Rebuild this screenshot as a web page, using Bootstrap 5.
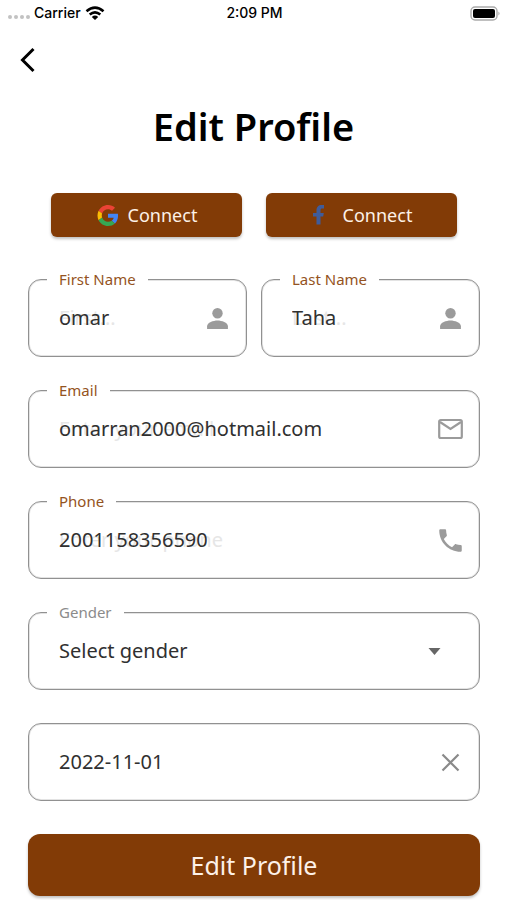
<!DOCTYPE html>
<html lang="en">
<head>
<meta charset="utf-8">
<meta name="viewport" content="width=device-width, initial-scale=1">
<title>Edit Profile</title>
<link href="https://cdn.jsdelivr.net/npm/bootstrap@5.3.0/dist/css/bootstrap.min.css" rel="stylesheet">
<style>
  :root { --brown: #823b06; --line: #919191; --icon: #9b9b9b; }
  body { font-family: "Noto Sans", sans-serif; color: #000; background: #fff; }
  svg { display: block; flex-shrink: 0; }
  .status { height: 26px; padding: 0 6px 0 8px; font: 500 14px/26px Inter, sans-serif; }
  .signal { gap: 2px; }
  .signal i { width: 4px; height: 4px; border-radius: 50%; background: #c2c2c2; }
  .back { margin: 18px 0 0 16px; }
  .page-title { margin: 26px 0 0; font-size: 38px; line-height: 48px; font-weight: 600; }
  .btn-brown, .btn-brown:hover, .btn-brown:active { background: var(--brown) !important; color: #fdf1e8 !important; border: 0; box-shadow: 0 2px 3px rgba(0,0,0,.25); }
  main { padding: 0 27px 4px 28px; }
  .socials { gap: 24px; padding: 0 23px; margin: 43px 0 42px; }
  .social { height: 44px; font-size: 18px; line-height: 24px; border-radius: 6px; }
  .fields { gap: 33px; }
  .pair { gap: 14px; }
  .field { height: 78px; border: 1px solid var(--line); border-radius: 13px; box-shadow: inset 0 0 0 1px rgba(145,145,145,.25); padding: 0 16px 0 30px; }
  .field > label { top: -11px; left: 18px; padding: 0 12px; background: #fff; color: #945322; font-size: 15px; line-height: 20px; }
  .field > label.muted { color: #8b8b8b; }
  .entry { display: grid; min-width: 0; }
  .entry > * { grid-area: 1 / 1; min-width: 0; width: 100%; font-size: 20px; line-height: 28px; }
  .entry input, .entry select { border: 0; padding: 0; background: transparent; color: #303030; outline: 0; appearance: none; }
  .hint { color: #e6e6e6; white-space: nowrap; }
  .submit { height: 62px; border-radius: 12px; font-size: 25px; line-height: 32px; }
</style>
</head>
<body>
<header class="status d-flex align-items-center justify-content-between">
  <div class="d-flex align-items-center col">
    <span class="signal d-flex pt-2"><i></i><i></i><i></i><i></i></span>
    <span class="ms-1">Carrier</span>
    <svg class="ms-1" width="20" height="15" viewBox="0 0 20 15" fill="none" stroke="#000" stroke-width="2.6"><path d="M1.5 5.2Q10-2 18.5 5.2M4.7 8.6Q10 4.2 15.3 8.6"/><path d="M10 14 6.8 10.9Q10 8.3 13.2 10.9Z" fill="#000" stroke="none"/></svg>
  </div>
  <div>2:09 PM</div>
  <div class="col d-flex justify-content-end">
    <svg width="31" height="15" viewBox="0 0 31 15"><rect x="1" y="1" width="26" height="13" rx="4" fill="#fff" stroke="#aaa" stroke-width="1.4"/><rect x="3" y="3" width="22" height="9" rx="2" fill="#000"/><path d="M28.5 5.5q2 2 0 4z" fill="#999"/></svg>
  </div>
</header>
<button type="button" class="back btn p-0 border-0 d-block" aria-label="Back">
  <svg width="24" height="32" viewBox="0 0 24 32" fill="none" stroke="#000" stroke-width="3"><path d="M17.5 5 6.500 16l11 11"/></svg>
</button>
<h1 class="page-title text-center">Edit Profile</h1>
<main>
  <div class="socials d-flex">
    <button type="button" class="btn btn-brown social col p-0 d-flex align-items-center justify-content-center">
      <svg class="me-2" width="24" height="21" viewBox="0 0 48 48"><path fill="#EA4335" d="M24 9.5c3.54 0 6.71 1.22 9.21 3.6l6.85-6.85C35.9 2.38 30.47 0 24 0 14.62 0 6.51 5.38 2.56 13.22l7.98 6.19C12.43 13.72 17.74 9.5 24 9.5z"/><path fill="#4285F4" d="M46.98 24.55c0-1.57-.15-3.09-.38-4.55H24v9.02h12.94c-.58 2.96-2.26 5.48-4.78 7.18l7.73 6c4.51-4.18 7.09-10.36 7.09-17.65z"/><path fill="#FBBC05" d="M10.53 28.59c-.48-1.45-.76-2.99-.76-4.59s.27-3.14.76-4.59l-7.98-6.19C.92 16.46 0 20.12 0 24s.92 7.54 2.56 10.78l7.97-6.19z"/><path fill="#34A853" d="M24 48c6.48 0 11.93-2.13 15.89-5.81l-7.73-6c-2.15 1.45-4.92 2.3-8.16 2.3-6.26 0-11.57-4.22-13.47-9.910l-7.98 6.190C6.510 42.620 14.620 48 24 48z"/></svg>
      Connect
    </button>
    <button type="button" class="btn btn-brown social col p-0 d-flex align-items-center justify-content-center">
      <svg class="me-2" width="24" height="24" viewBox="0 0 24 24"><path fill="#3f5c9b" d="M5.500 21.500v-8H2V10h3.500V7.500c0-3.600 2-5.500 5-5.500H13v3.500h-1.700c-1.300 0-1.800.6-1.800 1.800V10h3.300l-.6 3.500H9.500v8z"/></svg>
      Connect
    </button>
  </div>
  <form class="fields d-flex flex-column">
    <div class="pair d-flex">
      <div class="field position-relative d-flex align-items-center col">
        <label class="position-absolute" for="first">First Name</label>
        <div class="entry flex-grow-1"><span class="hint" aria-hidden="true">First...</span><input id="first" type="text" value="omar"></div>
        <svg width="25" height="25" viewBox="0 0 24 24" fill="#9b9b9b"><circle cx="12" cy="7" r="5"/><path d="M2 22v-2.500C2 16 8 14 12 14s10 2 10 5.500V22z"/></svg>
      </div>
      <div class="field position-relative d-flex align-items-center col">
        <label class="position-absolute" for="last">Last Name</label>
        <div class="entry flex-grow-1"><span class="hint" aria-hidden="true">Last...</span><input id="last" type="text" value="Taha"></div>
        <svg width="25" height="25" viewBox="0 0 24 24" fill="#9b9b9b"><circle cx="12" cy="7" r="5"/><path d="M2 22v-2.500C2 16 8 14 12 14s10 2 10 5.500V22z"/></svg>
      </div>
    </div>
    <div class="field position-relative d-flex align-items-center">
      <label class="position-absolute" for="email">Email</label>
      <div class="entry flex-grow-1"><span class="hint" aria-hidden="true">Enter your email</span><input id="email" type="email" value="omarran2000@hotmail.com"></div>
      <svg width="25" height="22" viewBox="0 0 25 22" fill="none" stroke="#9b9b9b" stroke-width="2.200"><rect x="1.200" y="2" width="22.600" height="18" rx="1.500"/><path d="m2 4 10.500 7L23 4" /></svg>
    </div>
    <div class="field position-relative d-flex align-items-center">
      <label class="position-absolute" for="phone">Phone</label>
      <div class="entry flex-grow-1"><span class="hint" aria-hidden="true">Enter your phone</span><input id="phone" type="tel" value="2001158356590"></div>
      <svg width="25" height="25" viewBox="2 2 20 20" fill="#9b9b9b"><path d="M6.620 10.790c1.440 2.830 3.760 5.140 6.590 6.590l2.200-2.200c.27-.27.67-.36 1.020-.24 1.120.37 2.330.57 3.570.57.55 0 1 .45 1 1V20c0 .55-.45 1-1 1-9.390 0-17-7.610-17-17 0-.55.45-1 1-1h3.500c.55 0 1 .45 1 1 0 1.250.2 2.450.57 3.570.11.35.03.74-.25 1.020z"/></svg>
    </div>
    <div class="field position-relative d-flex align-items-center">
      <label class="position-absolute muted" for="gender">Gender</label>
      <div class="entry flex-grow-1"><select id="gender"><option>Select gender</option></select></div>
      <svg class="me-3" width="25" height="25" viewBox="0 0 25 25"><path d="M6.500 9h12l-6 7z" fill="#666"/></svg>
    </div>
    <div class="field position-relative d-flex align-items-center">
      <div class="entry flex-grow-1"><input id="date" type="text" aria-label="Date" value="2022-11-01"></div>
      <button type="button" class="btn p-0 border-0" aria-label="Clear date"><svg width="25" height="25" viewBox="0 0 25 25" fill="none" stroke="#8a8a8a" stroke-width="2.200"><path d="m4.500 4.500 16 16m0-16-16 16"/></svg></button>
    </div>
    <button type="submit" class="btn btn-brown submit w-100 p-0">Edit Profile</button>
  </form>
</main>
<script src="https://cdn.jsdelivr.net/npm/bootstrap@5.3.0/dist/js/bootstrap.bundle.min.js"></script>
</body>
</html>
